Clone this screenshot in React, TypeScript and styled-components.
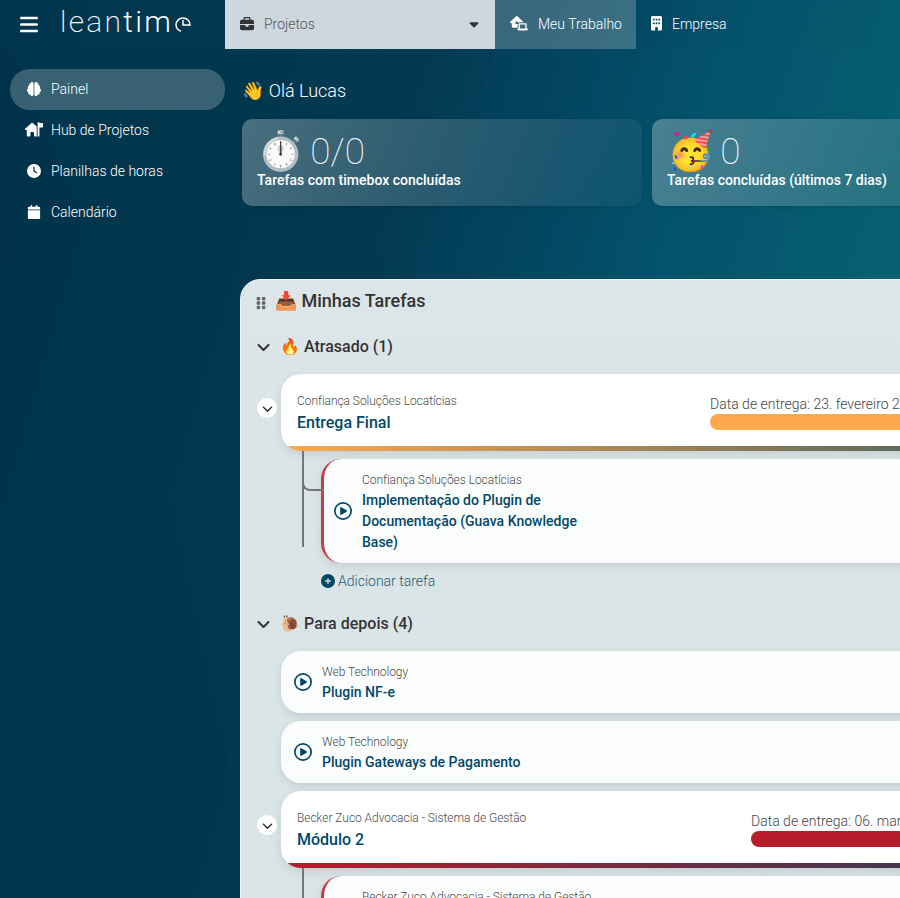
import React from "react";
import styled, { createGlobalStyle } from "styled-components";
import {
    FaAngleDown,
    FaBars,
    FaBrain,
    FaBriefcase,
    FaBuilding,
    FaCalendar,
    FaCaretDown,
    FaChevronDown,
    FaCirclePlus,
    FaClock,
    FaGripVertical,
    FaHouseFlag,
    FaHouseLaptop,
    FaRegCirclePlay,
} from "react-icons/fa6";

const GlobalStyle = createGlobalStyle`
html, body {
    margin: 0;
    height: 100%;
    overflow: hidden;
    background: #03374f;
}
body {
    font-family: Roboto, "Liberation Sans", "Noto Color Emoji", sans-serif;
    font-size: 14px;
    color: #fff;
}
* {
    box-sizing: border-box;
}
`;

const Shell = styled.div`
position: relative;
width: 900px;
height: 898px;
overflow: hidden;
background: linear-gradient(106deg, #02364e 0%, #033a52 38%, #03425d 50%, #04506a 62%, #0a6a74 100%);
`;

const Backdrop = styled.svg`
position: absolute;
inset: 0;
width: 900px;
height: 898px;
`;

const Page = styled.div`
position: relative;
`;

// Верхняя панель
const Header = styled.header`
display: flex;
height: 49px;
`;

const Brand = styled.div`
display: flex;
align-items: center;
width: 225px;
padding-left: 20px;
`;

const Burger = styled(FaBars)`
width: 18px;
height: 21px;
margin-right: 22px;
`;

const LogoText = styled.span<{ $bold?: boolean }>`
font-size: 30px;
font-weight: ${(p) => (p.$bold ? 300 : 200)};
letter-spacing: 2.3px;
line-height: 40px;
margin-top: -6px;
`;

const LogoClock = styled.svg`
width: 16px;
height: 15px;
margin: 0 0 0 2px;
`;

const ProjectSelect = styled.div`
display: flex;
align-items: center;
width: 270px;
padding: 0 15px 2px;
background: #ced7dd;
color: #555;
font-weight: 300;
`;

const SelectIcon = styled(FaBriefcase)`
width: 14px;
height: 14px;
margin-right: 10px;
color: #333;
`;

const SelectCaret = styled(FaCaretDown)`
width: 12px;
height: 14px;
margin-left: auto;
color: #333;
`;

const TopLink = styled.div<{ $active?: boolean }>`
display: flex;
align-items: center;
gap: 10px;
padding: 0 ${(p) => (p.$active ? "14px" : "15px")} 2px 15px;
font-weight: 300;
background: ${(p) => (p.$active ? "rgba(255, 255, 255, 0.22)" : "transparent")};
`;

const LaptopIcon = styled(FaHouseLaptop)`
flex: none;
width: 18px;
height: 14.4px;
`;

const BuildingIcon = styled(FaBuilding)`
flex: none;
width: 11px;
height: 14.6px;
`;

const Body = styled.div`
display: flex;
`;

// Боковое меню
const Sidebar = styled.nav`
flex: none;
display: flex;
flex-direction: column;
width: 225px;
padding: 20px 0 0 10px;
`;

const NavItem = styled.div<{ $active?: boolean }>`
display: flex;
align-items: center;
height: 41px;
padding: 0 0 2px 16px;
gap: 9px;
border-radius: 20px;
font-weight: 300;
background: ${(p) => (p.$active ? "rgba(255, 255, 255, 0.22)" : "transparent")};
`;

const NavIcon = styled.span`
display: flex;
justify-content: center;
width: 16px;
font-size: 14px;
`;

const HubIcon = styled(FaHouseFlag)`
flex: none;
width: 18px;
height: 14.4px;
`;

const Main = styled.main`
flex: none;
width: 760px;
padding: 0 0 0 15px;
`;

const Greeting = styled.h1`
margin: 0;
padding: 30px 0 0 2px;
height: 70px;
font-size: 18px;
font-weight: 300;
line-height: 24px;
`;

const Stats = styled.div`
display: flex;
gap: 10px;
margin-left: 2px;
`;

const StatCard = styled.div<{ $width: number }>`
flex: none;
width: ${(p) => p.$width}px;
height: 87px;
padding: 10px 15px;
border-radius: 10px;
background: linear-gradient(110deg, rgba(255, 255, 255, 0.28), rgba(255, 255, 255, 0.03));
box-shadow: 0 1px 4px rgba(0, 0, 0, 0.12);
`;

const StatTop = styled.div`
display: flex;
align-items: center;
gap: 6px;
height: 43px;
`;

const StatEmoji = styled.span`
font-size: 38px;
line-height: 44px;
`;

const StatValue = styled.span`
margin-top: 2px;
font-size: 37px;
font-weight: 100;
line-height: 44px;
`;

const StatLabel = styled.div`
font-weight: 500;
line-height: 16px;
`;

const Panel = styled.section`
height: 640px;
margin-top: 73px;
padding: 9px 0 0 15px;
border: 1px solid #eef3f4;
border-radius: 20px 0 0 0;
background: linear-gradient(180deg, #dce5e8, #d8e4e6);
color: #333;
`;

const PanelTitle = styled.h2`
display: flex;
align-items: center;
margin: 0;
height: 25px;
padding-bottom: 1px;
font-size: 18px;
font-weight: 500;
line-height: 24px;
`;

const Grip = styled(FaGripVertical)`
width: 10px;
height: 14px;
margin: 4px 9px 0 0;
color: #666;
`;

const TitleEmoji = styled.span`
margin-right: 4px;
`;

const GroupTitle = styled.h3`
display: flex;
align-items: center;
height: 24px;
margin: 21px 0 15px;
font-size: 16px;
font-weight: 500;
line-height: 24px;
`;

const GroupChevron = styled(FaAngleDown)`
width: 15px;
height: 16px;
margin: 0 9px 0 0;
`;

const GroupEmoji = styled.span`
width: 21px;
margin-right: 3px;
font-size: 16px;
`;

const Tasks = styled.div`
display: flex;
flex-direction: column;
gap: 8px;
margin-left: 25px;
`;

const Milestone = styled.div<{ $color: string }>`
position: relative;
display: flex;
justify-content: space-between;
height: 77px;
padding: 18px 39px 0 16px;
border-radius: 20px;
background: #fff;
box-shadow: 0 3px 8px rgba(0, 0, 0, 0.1);

&::after {
    content: "";
    position: absolute;
    left: 0;
    right: 0;
    bottom: 0;
    height: 20px;
    border-bottom: 5px solid;
    border-image: linear-gradient(90deg, ${(p) => p.$color}, #004766 980px) 1;
    clip-path: inset(0 0 0 0 round 0 0 0 20px);
    pointer-events: none;
}
`;

const Toggle = styled.span`
position: absolute;
left: -24px;
top: 24px;
display: flex;
align-items: center;
justify-content: center;
width: 20px;
height: 20px;
border-radius: 50%;
background: #fff;
color: #222;

svg {
    width: 11px;
    height: 11px;
}
`;

const Project = styled.div`
font-size: 12px;
font-weight: 300;
line-height: 18px;
letter-spacing: -0.05px;
color: #4a4a4a;
white-space: nowrap;
`;

const MilestoneTitle = styled.div`
margin-top: 3px;
font-size: 16px;
font-weight: 500;
line-height: 20px;
color: #00496a;
`;

const Due = styled.div<{ $width: number }>`
width: ${(p) => p.$width}px;
margin-top: 4px;
font-weight: 300;
line-height: 16px;
color: #444;
white-space: nowrap;
`;

const DueBar = styled.div<{ $color: string }>`
height: 16px;
margin-top: 2px;
border-radius: 8px;
background: ${(p) => p.$color};
`;

const SubTasks = styled.div`
position: relative;
display: flex;
flex-direction: column;
gap: 8px;
margin-left: 40px;

&::before {
    content: "";
    position: absolute;
    left: -19px;
    top: -8px;
    width: 2px;
    height: 96px;
    background: #777;
}
`;

const TaskCard = styled.div<{ $flag?: boolean }>`
position: relative;
display: flex;
align-items: center;
gap: 10px;
min-height: 62px;
padding: 0 13px 0 ${(p) => (p.$flag ? "10px" : "13px")};
border-radius: 20px;
background: #fbfdfd;
box-shadow: 0 3px 8px rgba(0, 0, 0, 0.1);
border-left: ${(p) => (p.$flag ? "3px solid #cc3a46" : "0")};
`;

const Branch = styled.span`
position: absolute;
left: -22px;
top: 14px;
width: 21px;
height: 18px;
border-left: 2px solid #777;
border-bottom: 2px solid #777;
border-radius: 0 0 0 8px;
`;

const Play = styled(FaRegCirclePlay)`
flex: none;
width: 18px;
height: 18px;
color: #004766;
`;

const TaskInfo = styled.div<{ $wrap?: boolean }>`
align-self: flex-start;
width: ${(p) => (p.$wrap ? "226px" : "auto")};
padding: 12px 0 10px;
`;

const TaskTitle = styled.div`
margin-top: 1px;
font-weight: 500;
line-height: 21px;
color: #00496a;
`;

const AddTask = styled.div`
display: flex;
align-items: center;
gap: 3px;
margin: 9px 0 1px 40px;
font-weight: 300;
line-height: 18px;
color: #1c5a75;

svg {
    width: 14px;
    height: 14px;
    color: #004766;
}
`;

const App: React.FC = () => {
    return (
        <Shell>
            <GlobalStyle />
            <Backdrop viewBox="0 0 900 898" aria-hidden="true">
                <polygon points="0,30 115,279 260,898 0,898" fill="rgba(0,30,50,0.04)" />
                <polygon points="0,49 297,49 405,320 240,898 0,898" fill="rgba(0,40,50,0.05)" />
                <polygon points="495,49 900,49 900,320 405,320" fill="rgba(10,110,130,0.05)" />
            </Backdrop>
            <Page>
                <Header>
                    <Brand>
                        <Burger />
                        <LogoText>lean</LogoText>
                        <LogoText $bold>tim</LogoText>
                        <LogoClock viewBox="0 0 16 15" fill="none" stroke="#fff" strokeWidth="1.5" aria-hidden="true">
                            <path d="M1 8 A7 7 0 0 1 15 8 H8 V3" />
                            <path d="M1 8 A7 7 0 0 0 6 14.2" />
                        </LogoClock>
                    </Brand>
                    <ProjectSelect>
                        <SelectIcon />
                        Projetos
                        <SelectCaret />
                    </ProjectSelect>
                    <TopLink $active>
                        <LaptopIcon />
                        Meu Trabalho
                    </TopLink>
                    <TopLink>
                        <BuildingIcon />
                        Empresa
                    </TopLink>
                </Header>
                <Body>
                    <Sidebar>
                        <NavItem $active>
                            <NavIcon><FaBrain /></NavIcon>
                            Painel
                        </NavItem>
                        <NavItem>
                            <NavIcon><HubIcon /></NavIcon>
                            Hub de Projetos
                        </NavItem>
                        <NavItem>
                            <NavIcon><FaClock /></NavIcon>
                            Planilhas de horas
                        </NavItem>
                        <NavItem>
                            <NavIcon><FaCalendar /></NavIcon>
                            Calendário
                        </NavItem>
                    </Sidebar>
                    <Main>
                        <Greeting>👋 Olá Lucas</Greeting>
                        <Stats>
                            <StatCard $width={400}>
                                <StatTop>
                                    <StatEmoji>⏱️</StatEmoji>
                                    <StatValue>0/0</StatValue>
                                </StatTop>
                                <StatLabel>Tarefas com timebox concluídas</StatLabel>
                            </StatCard>
                            <StatCard $width={400}>
                                <StatTop>
                                    <StatEmoji>🥳</StatEmoji>
                                    <StatValue>0</StatValue>
                                </StatTop>
                                <StatLabel>Tarefas concluídas (últimos 7 dias)</StatLabel>
                            </StatCard>
                        </Stats>
                        <Panel>
                            <PanelTitle>
                                <Grip />
                                <TitleEmoji>📥</TitleEmoji>
                                Minhas Tarefas
                            </PanelTitle>
                            <GroupTitle>
                                <GroupChevron />
                                <GroupEmoji>🔥</GroupEmoji>
                                Atrasado (1)
                            </GroupTitle>
                            <Tasks>
                                <Milestone $color="#ffa94d">
                                    <Toggle><FaChevronDown /></Toggle>
                                    <div>
                                        <Project>Confiança Soluções Locatícias</Project>
                                        <MilestoneTitle>Entrega Final</MilestoneTitle>
                                    </div>
                                    <Due $width={235}>
                                        Data de entrega: 23. fevereiro 2026
                                        <DueBar $color="#ffa94d" />
                                    </Due>
                                </Milestone>
                                <SubTasks>
                                    <TaskCard $flag>
                                        <Branch />
                                        <Play />
                                        <TaskInfo $wrap>
                                            <Project>Confiança Soluções Locatícias</Project>
                                            <TaskTitle>Implementação do Plugin de Documentação (Guava Knowledge Base)</TaskTitle>
                                        </TaskInfo>
                                    </TaskCard>
                                </SubTasks>
                            </Tasks>
                            <Tasks>
                                <AddTask>
                                    <FaCirclePlus />
                                    Adicionar tarefa
                                </AddTask>
                            </Tasks>
                            <GroupTitle>
                                <GroupChevron />
                                <GroupEmoji>🐌</GroupEmoji>
                                Para depois (4)
                            </GroupTitle>
                            <Tasks>
                                <TaskCard>
                                    <Play />
                                    <TaskInfo>
                                        <Project>Web Technology</Project>
                                        <TaskTitle>Plugin NF-e</TaskTitle>
                                    </TaskInfo>
                                </TaskCard>
                                <TaskCard>
                                    <Play />
                                    <TaskInfo>
                                        <Project>Web Technology</Project>
                                        <TaskTitle>Plugin Gateways de Pagamento</TaskTitle>
                                    </TaskInfo>
                                </TaskCard>
                                <Milestone $color="#b71c2b">
                                    <Toggle><FaChevronDown /></Toggle>
                                    <div>
                                        <Project>Becker Zuco Advocacia - Sistema de Gestão</Project>
                                        <MilestoneTitle>Módulo 2</MilestoneTitle>
                                    </div>
                                    <Due $width={194}>
                                        Data de entrega: 06. março 2026
                                        <DueBar $color="#b71c2b" />
                                    </Due>
                                </Milestone>
                                <SubTasks>
                                    <TaskCard $flag>
                                        <Branch />
                                        <Play />
                                        <TaskInfo $wrap>
                                            <Project>Becker Zuco Advocacia - Sistema de Gestão</Project>
                                        </TaskInfo>
                                    </TaskCard>
                                </SubTasks>
                            </Tasks>
                        </Panel>
                    </Main>
                </Body>
            </Page>
        </Shell>
    );
};

export default App;
